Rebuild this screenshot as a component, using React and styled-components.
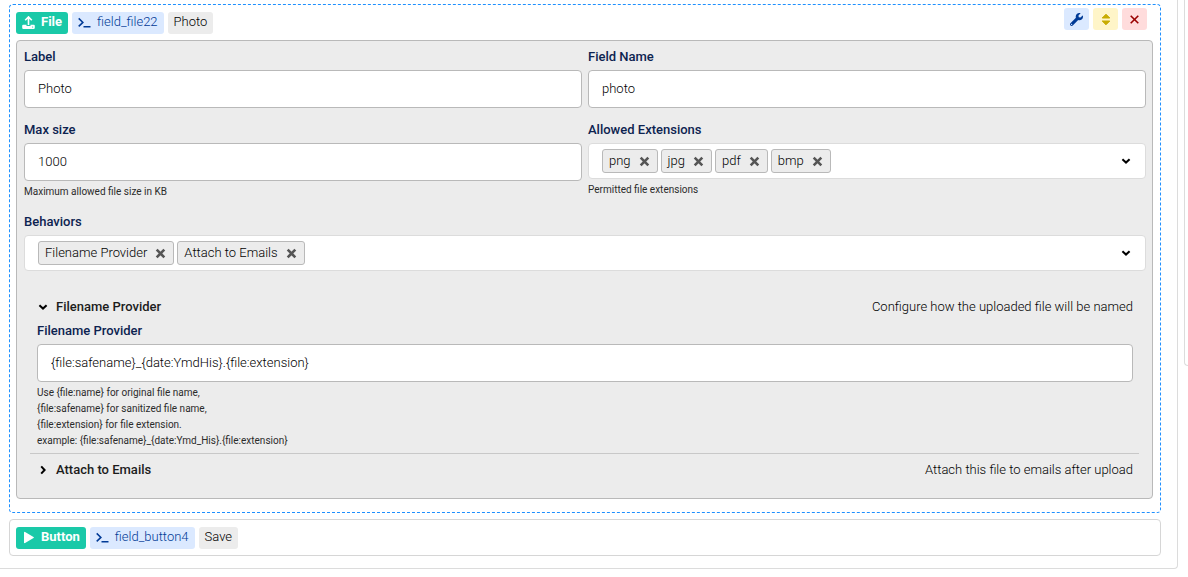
import React, { useId, useState } from 'react'
import styled, { createGlobalStyle, css } from 'styled-components'
import { FaWrench } from 'react-icons/fa'

const UploadIcon = () => (
    <svg width="13" height="13" viewBox="0 0 13 13" fill="none" stroke="currentColor" aria-hidden="true">
        <path d="M6.5 9V1.2M3.2 4.2l3.3-3.3 3.3 3.3" strokeWidth="1.6" />
        <path d="M1.2 8.7h3.3v1.2h4V8.7h3.3a1 1 0 0 1 1 1v2a1.2 1.2 0 0 1-1.2 1.2H1.4A1.2 1.2 0 0 1 .2 11.7v-2a1 1 0 0 1 1-1z" fill="currentColor" stroke="none" />
        <circle cx="10.6" cy="11" r=".6" fill="#1ac9a8" stroke="none" />
    </svg>
)

const PlayIcon = () => (
    <svg width="13" height="13" viewBox="0 0 13 13" fill="currentColor" aria-hidden="true">
        <path d="M2 1.6v9.8a.7.7 0 0 0 1.1.6l8.4-4.9a.7.7 0 0 0 0-1.2L3.1 1a.7.7 0 0 0-1.1.6z" />
    </svg>
)

const PromptIcon = () => (
    <svg width="13" height="13" viewBox="0 0 13 13" fill="none" stroke="currentColor" strokeWidth="1.5" aria-hidden="true">
        <path d="M.7 2.4l4.2 4-4.2 4M5.5 10.8h7" />
    </svg>
)

const SortIcon = () => (
    <svg width="12" height="13" viewBox="0 0 12 13" fill="currentColor" stroke="currentColor" strokeLinejoin="round" aria-hidden="true">
        <path d="M6 1.2l3.8 3.8H2.2zM6 11.8l3.8-3.8H2.2z" />
    </svg>
)

const CloseIcon = () => (
    <svg width="11" height="11" viewBox="0 0 11 11" stroke="currentColor" strokeWidth="1.6" aria-hidden="true">
        <path d="M1.7 1.7l7.6 7.6M9.3 1.7L1.7 9.3" />
    </svg>
)

const RemoveIcon = () => (
    <svg width="11" height="11" viewBox="0 0 11 11" stroke="currentColor" strokeWidth="2.6" aria-hidden="true">
        <path d="M1.7 1.7l7.6 7.6M9.3 1.7L1.7 9.3" />
    </svg>
)

const ChevronIcon = () => (
    <svg width="10" height="10" viewBox="0 0 10 10" fill="none" stroke="currentColor" strokeWidth="2" aria-hidden="true">
        <path d="M1.4 3.2L5 6.6l3.6-3.4" />
    </svg>
)

function TextField({ label, help, value }) {
    const id = useId();
    const [text, setText] = useState(value);

    return (
        <Field>
            <Label htmlFor={id}>{label}</Label>
            <Input id={id} value={text} onChange={e => setText(e.target.value)} />
            {help && <Help>{help}</Help>}
        </Field>
    )
}

function TagField({ label, help, value, options }) {
    const id = useId();
    const [tags, setTags] = useState(value);

    return (
        <Field>
            <Label htmlFor={id}>{label}</Label>
            <TagBox>
                {tags.map(tag =>
                    <Tag key={tag}>
                        {tag}
                        <TagRemove aria-label={`Remove ${tag}`} onClick={() => setTags(tags.filter(t => t !== tag))}>
                            <RemoveIcon />
                        </TagRemove>
                    </Tag>
                )}
                <Picker id={id} value="" onChange={e => setTags([...tags, e.target.value])}>
                    <option value="" />
                    {options.filter(o => !tags.includes(o)).map(o =>
                        <option key={o} value={o}>{o}</option>
                    )}
                </Picker>
                <ChevronIcon />
            </TagBox>
            {help && <Help>{help}</Help>}
        </Field>
    )
}

function Behavior({ title, description, defaultOpen, children }) {
    const [open, setOpen] = useState(Boolean(defaultOpen));

    return (
        <BehaviorItem>
            <BehaviorToggle aria-expanded={open} onClick={() => setOpen(!open)}>
                <Arrow $open={open}><ChevronIcon /></Arrow>
                <BehaviorTitle>{title}</BehaviorTitle>
                <span>{description}</span>
            </BehaviorToggle>
            {open && children && <BehaviorBody>{children}</BehaviorBody>}
        </BehaviorItem>
    )
}

function App() {
    return (
        <>
            <GlobalStyle />
            <Page>
                <Builder>
                    <Card $active>
                        <CardHeader>
                            <Badge $tone="type"><UploadIcon />File</Badge>
                            <Badge $tone="handle"><PromptIcon />field_file22</Badge>
                            <Badge>Photo</Badge>
                            <Actions>
                                <Action $tone="blue" aria-label="Settings"><FaWrench size={13} /></Action>
                                <Action $tone="yellow" aria-label="Move"><SortIcon /></Action>
                                <Action $tone="red" aria-label="Delete"><CloseIcon /></Action>
                            </Actions>
                        </CardHeader>
                        <Settings>
                            <Row>
                                <TextField label="Label" value="Photo" />
                                <TextField label="Field Name" value="photo" />
                            </Row>
                            <Row>
                                <TextField label="Max size" value="1000" help="Maximum allowed file size in KB" />
                                <TagField
                                    label="Allowed Extensions"
                                    value={['png', 'jpg', 'pdf', 'bmp']}
                                    options={['png', 'jpg', 'pdf', 'bmp', 'gif', 'zip']}
                                    help="Permitted file extensions"
                                />
                            </Row>
                            <TagField
                                label="Behaviors"
                                value={['Filename Provider', 'Attach to Emails']}
                                options={['Filename Provider', 'Attach to Emails']}
                            />
                            <Behaviors>
                                <Behavior
                                    title="Filename Provider"
                                    description="Configure how the uploaded file will be named"
                                    defaultOpen
                                >
                                    <TextField
                                        label="Filename Provider"
                                        value="{file:safename}_{date:YmdHis}.{file:extension}"
                                        help={<>
                                            Use {'{file:name}'} for original file name,<br />
                                            {'{file:safename}'} for sanitized file name,<br />
                                            {'{file:extension}'} for file extension.<br />
                                            example: {'{file:safename}_{date:Ymd_His}.{file:extension}'}
                                        </>}
                                    />
                                </Behavior>
                                <Behavior
                                    title="Attach to Emails"
                                    description="Attach this file to emails after upload"
                                />
                            </Behaviors>
                        </Settings>
                    </Card>
                    <Card>
                        <CardHeader>
                            <Badge $tone="type"><PlayIcon />Button</Badge>
                            <Badge $tone="handle"><PromptIcon />field_button4</Badge>
                            <Badge>Save</Badge>
                        </CardHeader>
                    </Card>
                </Builder>
                <Sidebar />
            </Page>
        </>
    )
}

export default App

const GlobalStyle = createGlobalStyle`
    * {
        box-sizing: border-box;
    }

    body {
        margin: 0;
        background: white;
        color: black;
        font: 300 13px/20px Roboto, "Liberation Sans", sans-serif;
    }

    button, input, select {
        font: inherit;
        color: inherit;
    }

    button {
        border: 0;
        padding: 0;
        background: none;
        cursor: pointer;
    }

    svg {
        display: block;
        flex-shrink: 0;
    }
`

const Page = styled.div`
    display: flex;
    align-items: flex-start;
    gap: 6px;
    overflow: hidden;
`

const Builder = styled.main`
    flex: 1;
    min-width: 0;
    display: flex;
    flex-direction: column;
    gap: 6px;
    padding: 4px 16px 12px 9px;
    border: 1px solid #dcdcdc;
    border-width: 0 1px 1px 0;
    border-bottom-right-radius: 4px;
`

const Sidebar = styled.aside`
    width: 4px;
    height: 366px;
    border: 1px solid #dcdcdc;
    border-width: 0 0 1px 1px;
    border-bottom-left-radius: 4px;
`

const Card = styled.section`
    padding: 7px 7px 6px 6px;
    border: 1px solid #d6d6d6;
    border-radius: 4px;

    ${props => props.$active && css`
        padding-bottom: 13px;
        border: 1px dashed #1e90ff;
    `}
`

const CardHeader = styled.header`
    display: flex;
    align-items: flex-start;
    gap: 4px;
`

const badgeTones = {
    type: css`
        background: #1ac9a8;
        color: white;
        font-weight: 700;
    `,
    handle: css`
        background: #dbe9ff;
        color: #003a96;
    `,
}

const Badge = styled.span`
    display: inline-flex;
    align-items: center;
    gap: 6px;
    height: 22px;
    padding: 0 6px 2px;
    border-radius: 3px;
    background: #ececec;
    ${props => badgeTones[props.$tone]}

    svg {
        margin-top: 1px;
    }
`

const Actions = styled.div`
    display: flex;
    gap: 4px;
    margin: -4px 6px 0 auto;
`

const actionTones = {
    blue: css`
        background: #dbe9ff;
        color: #003a96;
    `,
    yellow: css`
        background: #fff5c8;
        color: #c8ac00;
    `,
    red: css`
        background: #ffdcdc;
        color: #9a0000;
    `,
}

const Action = styled.button`
    display: flex;
    align-items: center;
    justify-content: center;
    width: 25px;
    height: 22px;
    border-radius: 3px;
    ${props => actionTones[props.$tone]}
`

const Settings = styled.div`
    display: flex;
    flex-direction: column;
    gap: 12px;
    margin-top: 6px;
    padding: 6px 6px 12px 7px;
    border: 1px solid #b9b9b9;
    border-radius: 4px;
    background: #ececec;
`

const Row = styled.div`
    display: grid;
    grid-template-columns: 1fr 1fr;
    gap: 6px;
`

const Field = styled.div`
    display: flex;
    flex-direction: column;
`

const Label = styled.label`
    margin-bottom: 4px;
    line-height: 19px;
    font-weight: 500;
    color: #0d2350;
`

const Input = styled.input`
    width: 100%;
    height: 38px;
    padding: 0 13px 2px;
    border: 1px solid #b9b9b9;
    border-radius: 4px;
    background: white;
`

const Help = styled.small`
    margin-top: 3px;
    font-size: 10px;
    line-height: 16px;
    font-weight: 400;
    color: #2b2b2b;
`

const TagBox = styled.div`
    display: flex;
    align-items: center;
    gap: 3px;
    height: 36px;
    padding: 0 14px 0 13px;
    border: 1px solid #dcdcdc;
    border-radius: 4px;
    background: white;
`

const Tag = styled.span`
    display: inline-flex;
    align-items: center;
    gap: 8px;
    height: 24px;
    padding: 0 7px 0 6px;
    border: 1px solid #b9b9b9;
    border-radius: 3px;
    background: #ececec;
`

const TagRemove = styled.button`
    color: #555;
`

const Picker = styled.select`
    flex: 1;
    min-width: 0;
    height: 100%;
    border: 0;
    background: none;
    appearance: none;
    outline: 0;
`

const Behaviors = styled.div`
    margin: 8px 7px 0 6px;
`

const BehaviorItem = styled.div`
    padding: 4px 6px 4px 7px;

    & + & {
        border-top: 1px solid #c8c8c8;
    }
`

const BehaviorToggle = styled.button`
    display: flex;
    align-items: center;
    gap: 8px;
    width: 100%;
    height: 24px;
    padding: 0 0 0 1px;
    text-align: left;
`

const BehaviorTitle = styled.span`
    flex: 1;
    font-weight: 500;
    color: #1c1c1c;
`

const Arrow = styled.span`
    transform: ${props => props.$open ? 'none' : 'rotate(-90deg)'};
`

const BehaviorBody = styled.div`
    padding-top: 2px;
`
